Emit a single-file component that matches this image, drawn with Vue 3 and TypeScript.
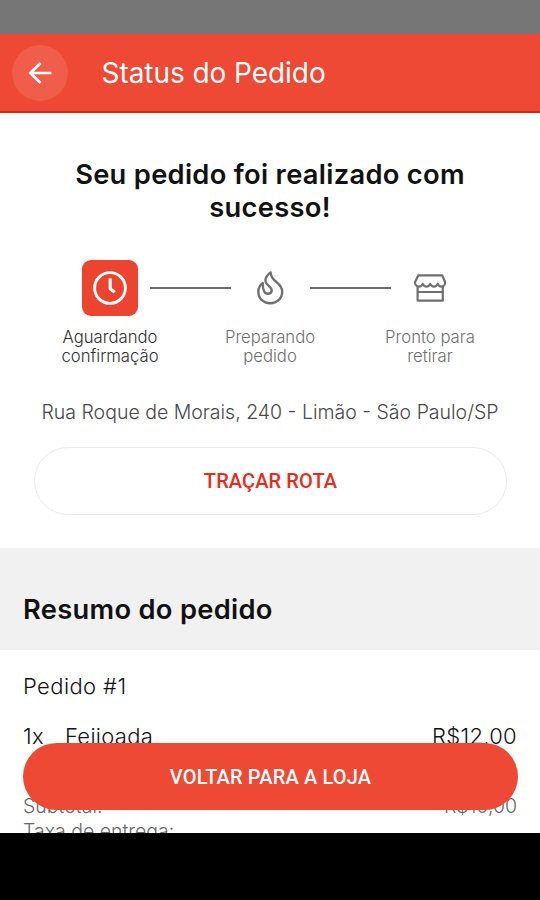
<script setup lang="ts">
interface Step {
  icon: 'clock' | 'flame' | 'store'
  lines: string[]
  active: boolean
}

interface Amount {
  label: string
  value: string
}

const steps: Step[] = [
  { icon: 'clock', lines: ['Aguardando', 'confirmação'], active: true },
  { icon: 'flame', lines: ['Preparando', 'pedido'], active: false },
  { icon: 'store', lines: ['Pronto para', 'retirar'], active: false },
]

const totals: Amount[] = [
  { label: 'Subtotal:', value: 'R$10,00' },
  { label: 'Taxa de entrega:', value: '' },
]
</script>

<template>
  <div class="screen">
    <div class="status-bar"></div>

    <header class="toolbar">
      <button class="back" aria-label="Voltar">
        <svg width="24" height="24" viewBox="0 0 24 24" fill="none" stroke="#fff" stroke-width="2.7">
          <path d="M23.4 12H2.2M12.6 2 2.4 12l10.2 10" />
        </svg>
      </button>
      <span class="title">Status do Pedido</span>
    </header>

    <main class="content">
      <h1 class="headline">Seu pedido foi realizado com<br />sucesso!</h1>

      <div class="steps">
        <template v-for="(step, i) in steps" :key="step.icon">
          <div v-if="i > 0" class="connector"></div>
          <div class="step" :class="{ active: step.active }">
            <div class="step-icon">
              <svg v-if="step.icon === 'clock'" width="36" height="36" viewBox="0 0 36 36" fill="none" stroke="currentColor">
                <circle cx="18" cy="18" r="15.4" stroke-width="2.9" />
                <path d="M18.2 8.5v10.2l4.6 3.6" stroke-width="3.2" stroke-linejoin="round" />
              </svg>
              <svg v-else-if="step.icon === 'flame'" width="28" height="36" viewBox="0 0 28 36" fill="none" stroke="currentColor" stroke-width="2.4" stroke-linejoin="round">
                <path d="M14.6 2.4C11 5.2 8.9 8.4 9.5 11.6C10.2 15 15.7 16.6 15.7 20.3C15.7 22.4 14.2 23.8 12 23.8C8.7 23.8 6.6 20.6 6.8 12.9C3.8 15.2 2.3 18.2 2.3 21.5C2.3 28.2 7.2 33.2 14.2 33.2S26.2 28.2 26.2 21.4C26.2 12.2 14.8 12.1 14.6 2.4Z" />
              </svg>
              <svg v-else width="36" height="36" viewBox="0 0 36 36" fill="none" stroke="currentColor" stroke-width="2.2" stroke-linejoin="round">
                <path d="M6.3 5.3h23.8L33.2 12.2C33.2 14.5 31.8 16.6 29.4 16.6C27.7 16.6 26.4 15.5 25.7 13.8C25 15.5 23.7 16.6 22 16.6C20.3 16.6 18.9 15.5 18.2 13.8C17.5 15.5 16.2 16.6 14.5 16.6C12.8 16.6 11.5 15.5 10.8 13.8C10.1 15.5 8.8 16.6 7.1 16.6C4.5 16.6 3 14.5 3 12.2Z" />
                <path d="M5.6 16v14.6h25.2V16M5.6 22h25.2" />
              </svg>
            </div>
            <div class="step-label">
              <span v-for="line in step.lines" :key="line">{{ line }}</span>
            </div>
          </div>
        </template>
      </div>

      <p class="address">Rua Roque de Morais, 240 - Limão - São Paulo/SP</p>
      <button class="route">TRAÇAR ROTA</button>

      <h2 class="section">Resumo do pedido</h2>

      <section class="order">
        <p class="order-id">Pedido #1</p>
        <div class="item">
          <span class="qty">1x</span>
          <span class="name">Feijoada</span>
          <span>R$12,00</span>
        </div>
        <div class="totals">
          <div v-for="row in totals" :key="row.label" class="total">
            <span>{{ row.label }}</span>
            <span>{{ row.value }}</span>
          </div>
        </div>
      </section>

      <button class="store-button">VOLTAR PARA A LOJA</button>
    </main>

    <div class="nav-bar"></div>
  </div>
</template>

<style>
body {
  margin: 0;
}
</style>

<style scoped>
.screen {
  display: grid;
  grid-template-rows: 34px 79px 720px 67px;
  width: 540px;
  height: 900px;
  overflow: hidden;
  background: #fff;
  color: #111;
  font-family: Inter, Roboto, sans-serif;
  font-weight: 300;
}

button {
  padding: 0;
  border: 0;
  font-family: Roboto, "Liberation Sans", sans-serif;
  font-size: 20px;
  font-weight: 500;
}

.status-bar {
  background: #767676;
}

.toolbar {
  display: flex;
  align-items: center;
  box-sizing: border-box;
  padding: 1px 0 0 12px;
  gap: 33.5px;
  border-bottom: 2px solid #dc211a;
  background: #ed4934;
  color: #fff;
}

.back {
  display: flex;
  align-items: center;
  justify-content: center;
  width: 56px;
  height: 56px;
  border-radius: 50%;
  background: #f05e4b;
}

.title {
  font-size: 28px;
  font-weight: 400;
  line-height: 34px;
  letter-spacing: -0.06px;
}

.content {
  position: relative;
  display: flex;
  flex-direction: column;
  overflow: hidden;
}

.content > * {
  flex-shrink: 0;
}

.headline {
  margin: 45px 0 0;
  font-size: 27.3px;
  font-weight: 600;
  line-height: 33px;
  letter-spacing: 0.3px;
  text-align: center;
}

.steps {
  display: flex;
  justify-content: center;
  margin-top: 36px;
}

.step {
  display: flex;
  flex-direction: column;
  align-items: center;
  width: 56px;
  color: #707070;
}

.step.active {
  color: #303030;
}

.step-icon {
  display: flex;
  align-items: center;
  justify-content: center;
  width: 56px;
  height: 56px;
  border-radius: 9px;
}

.active .step-icon {
  background: #ed4430;
  color: #fff;
}

.step-label {
  display: flex;
  flex-direction: column;
  align-items: center;
  margin-top: 11.5px;
  font-size: 16.7px;
  line-height: 19.5px;
  white-space: nowrap;
}

.connector {
  width: 81px;
  height: 2px;
  margin: 27px 11.5px 0;
  background: #6c6c6c;
}

.address {
  margin: 33.5px 0 0;
  color: #484848;
  font-size: 19.5px;
  line-height: 24px;
  text-align: center;
}

.route {
  box-sizing: border-box;
  height: 68px;
  margin: 23px 33px 0 34px;
  border: 1px solid #ececec;
  border-radius: 34px;
  background: #fff;
  color: #e92c1a;
  letter-spacing: 0.1px;
}

.section {
  box-sizing: border-box;
  height: 102px;
  margin: 33px 0 0;
  padding: 45px 23px 0;
  background: #f1f1f1;
  font-size: 27.3px;
  font-weight: 600;
  line-height: 34px;
  letter-spacing: 0.3px;
}

.order {
  padding: 22px 23px 0;
  font-size: 22px;
  line-height: 28px;
}

.order p {
  margin: 0;
  letter-spacing: 0.4px;
}

.item {
  display: flex;
  margin-top: 22px;
  letter-spacing: 0.3px;
}

.qty {
  width: 42px;
}

.name {
  flex: 1;
}

.totals {
  margin-top: 44px;
  color: #686868;
  font-size: 19.5px;
  line-height: 24.5px;
}

.total {
  display: flex;
  justify-content: space-between;
}

.store-button {
  position: absolute;
  right: 22px;
  bottom: 23px;
  left: 23px;
  height: 67px;
  border-radius: 33.5px;
  background: #ed4934;
  color: #fff;
  letter-spacing: 0.15px;
}

.nav-bar {
  background: #000;
}
</style>
